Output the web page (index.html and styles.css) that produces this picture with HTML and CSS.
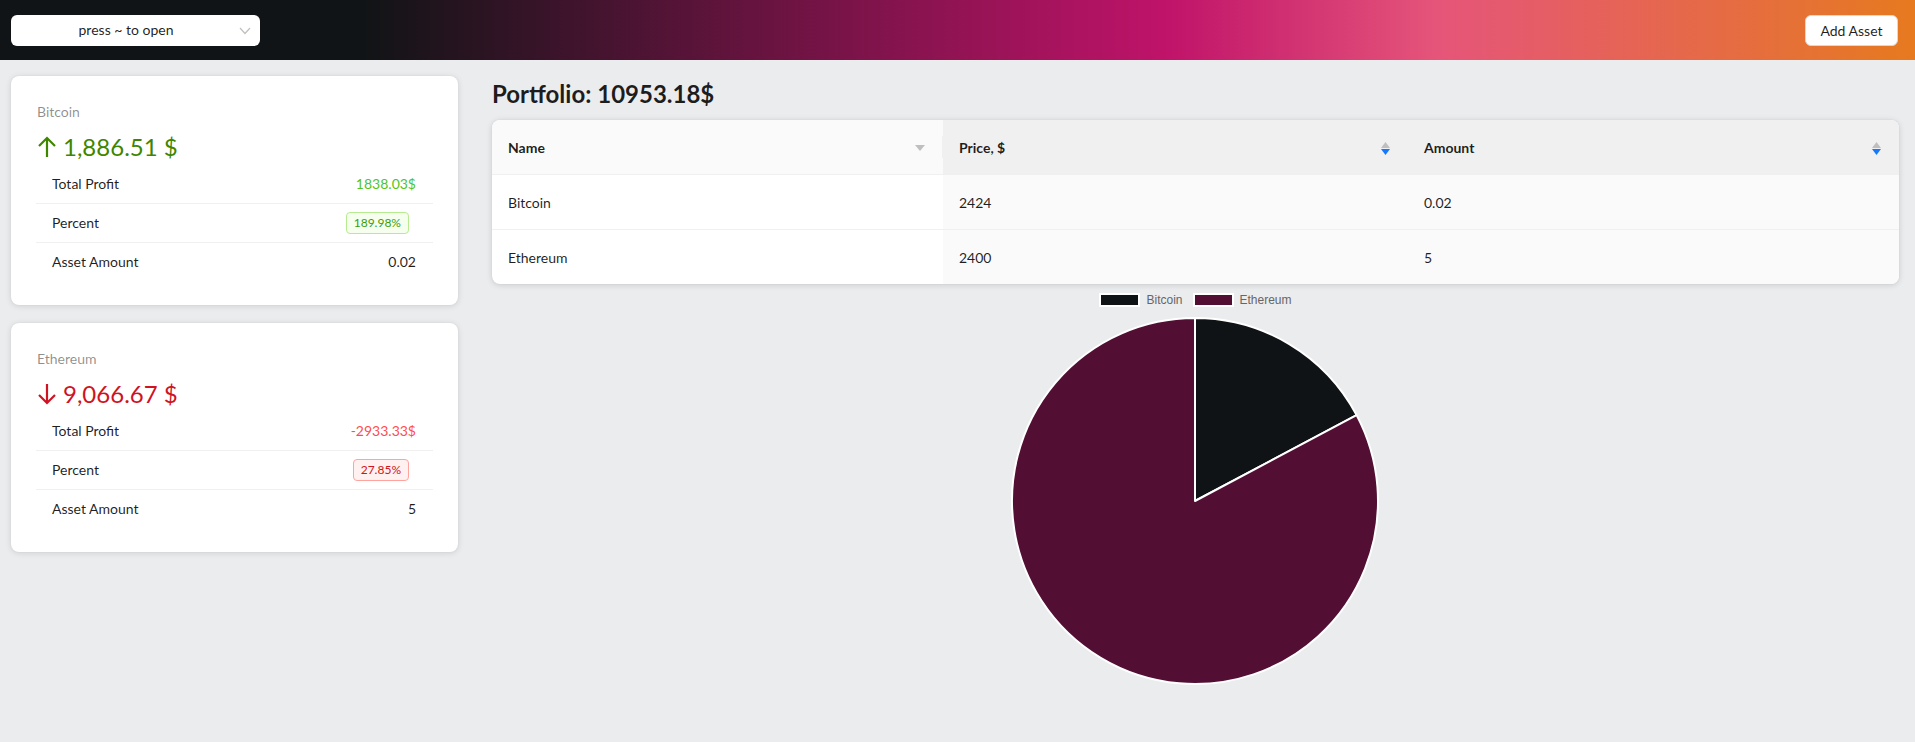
FILE: index.html
```html
<!DOCTYPE html>
<html lang="en">
<head>
<meta charset="utf-8">
<title>Portfolio</title>
<link rel="stylesheet" href="styles.css">
</head>
<body>
<header class="topbar">
  <div class="select">
    <span class="select-text">press ~ to open</span>
    <svg class="select-arrow" width="12" height="8" viewBox="0 0 12 8"><path d="M1 1 L6 6.5 L11 1" fill="none" stroke="#bfbfbf" stroke-width="1.2"/></svg>
  </div>
  <button class="btn">Add Asset</button>
</header>

<main class="layout">
  <aside class="cards">
    <section class="card">
      <div class="stat-title">Bitcoin</div>
      <div class="stat-value up">
        <svg class="stat-arrow" width="20" height="22" viewBox="0 0 20 22"><path d="M10 21 V2 M2 10 L10 2 L18 10" fill="none" stroke="currentColor" stroke-width="2.2"/></svg>
        <span>1,886.51 $</span>
      </div>
      <ul class="list">
        <li><span>Total Profit</span><span class="pos">1838.03$</span></li>
        <li><span>Percent</span><span class="tag tag-green">189.98%</span></li>
        <li><span>Asset Amount</span><span>0.02</span></li>
      </ul>
    </section>
    <section class="card">
      <div class="stat-title">Ethereum</div>
      <div class="stat-value down">
        <svg class="stat-arrow" width="20" height="22" viewBox="0 0 20 22"><path d="M10 1 V20 M2 12 L10 20 L18 12" fill="none" stroke="currentColor" stroke-width="2.2"/></svg>
        <span>9,066.67 $</span>
      </div>
      <ul class="list">
        <li><span>Total Profit</span><span class="neg">-2933.33$</span></li>
        <li><span>Percent</span><span class="tag tag-red">27.85%</span></li>
        <li><span>Asset Amount</span><span>5</span></li>
      </ul>
    </section>
  </aside>

  <section class="content">
    <h2 class="portfolio-title">Portfolio: 10953.18$</h2>
    <div class="table">
      <div class="th th-name">
        <span>Name</span>
        <svg class="filter-icon" width="10" height="7" viewBox="0 0 10 7"><path d="M0 0 H10 L5 6 Z" fill="#bfbfbf"/></svg>
      </div>
      <div class="th th-sorted">
        <span>Price, $</span>
        <span class="sorter">
          <svg width="9" height="6" viewBox="0 0 9 6"><path d="M0 6 L4.5 0 L9 6 Z" fill="#bfbfbf"/></svg>
          <svg width="9" height="6" viewBox="0 0 9 6"><path d="M0 0 L4.5 6 L9 0 Z" fill="#1677ff"/></svg>
        </span>
      </div>
      <div class="th th-sorted">
        <span>Amount</span>
        <span class="sorter">
          <svg width="9" height="6" viewBox="0 0 9 6"><path d="M0 6 L4.5 0 L9 6 Z" fill="#bfbfbf"/></svg>
          <svg width="9" height="6" viewBox="0 0 9 6"><path d="M0 0 L4.5 6 L9 0 Z" fill="#1677ff"/></svg>
        </span>
      </div>

      <div class="td">Bitcoin</div>
      <div class="td td-sorted">2424</div>
      <div class="td td-sorted">0.02</div>

      <div class="td td-last">Ethereum</div>
      <div class="td td-sorted td-last">2400</div>
      <div class="td td-sorted td-last">5</div>
    </div>

    <div class="chart">
      <div class="legend">
        <span class="legend-item"><span class="swatch swatch-btc"></span>Bitcoin</span>
        <span class="legend-item"><span class="swatch swatch-eth"></span>Ethereum</span>
      </div>
      <svg class="pie" width="370" height="370" viewBox="0 0 370 370">
        <path d="M185 185 L185 2 A183 183 0 0 1 346.58 99.10 Z" fill="#101315" stroke="#ffffff" stroke-width="2" stroke-linejoin="round"/>
        <path d="M185 185 L346.58 99.10 A183 183 0 1 1 185 2 Z" fill="#520f33" stroke="#ffffff" stroke-width="2" stroke-linejoin="round"/>
      </svg>
    </div>
  </section>
</main>
</body>
</html>
```

FILE: styles.css
```css
* {
  box-sizing: border-box;
}

html, body {
  margin: 0;
  padding: 0;
}

body {
  background: #ebecee;
  font-family: Lato, "Noto Sans", sans-serif;
  font-size: 14px;
  color: rgba(0, 0, 0, 0.88);
  min-height: 742px;
}

.topbar {
  height: 60px;
  display: flex;
  align-items: center;
  justify-content: space-between;
  padding: 0 17px 0 11px;
  background: linear-gradient(90deg, #111416 0%, #111416 19%, #c0136a 61%, #e5557a 75%, #e67a1f 100%);
}

.select {
  width: 249px;
  height: 31px;
  background: #ffffff;
  border-radius: 6px;
  display: flex;
  align-items: center;
  justify-content: center;
  position: relative;
  padding: 0 30px 0 11px;
}

.select-text {
  font-size: 14px;
  color: rgba(0, 0, 0, 0.88);
  line-height: 22px;
}

.select-arrow {
  position: absolute;
  right: 9px;
  top: 12px;
}

.btn {
  height: 31px;
  width: 93px;
  border: 1px solid #d9d9d9;
  background: #ffffff;
  border-radius: 6px;
  font-family: inherit;
  font-size: 14px;
  color: rgba(0, 0, 0, 0.88);
  padding: 0;
}

.layout {
  display: flex;
  align-items: flex-start;
  padding: 16px 16px 0 11px;
  gap: 34px;
}

.cards {
  width: 447px;
  flex: none;
  display: flex;
  flex-direction: column;
  gap: 18px;
}

.card {
  background: #ffffff;
  border-radius: 8px;
  box-shadow: 0 1px 6px rgba(0, 0, 0, 0.12), 0 0 2px rgba(0, 0, 0, 0.06);
  padding: 25px 25px 24px 25px;
}

.stat-title {
  color: rgba(0, 0, 0, 0.45);
  font-size: 14px;
  line-height: 22px;
  padding-left: 1px;
}

.stat-value {
  display: flex;
  align-items: center;
  gap: 6px;
  font-size: 24px;
  line-height: 32px;
  margin-top: 8px;
  padding-left: 1px;
}

.stat-value.up {
  color: #3f8600;
}

.stat-value.down {
  color: #cf1322;
}

.stat-arrow {
  flex: none;
}

.list {
  list-style: none;
  margin: 2px 0 0 0;
  padding: 0;
}

.list li {
  display: flex;
  align-items: center;
  justify-content: space-between;
  padding: 8px 17px 8px 16px;
  line-height: 22px;
  border-bottom: 1px solid #f0f0f0;
}

.list li:last-child {
  border-bottom: none;
}

.pos {
  color: #52c41a;
}

.neg {
  color: #ff4d4f;
}

.tag {
  font-size: 12px;
  line-height: 20px;
  padding: 0 7px;
  border-radius: 4px;
  border: 1px solid;
  margin-right: 7px;
}

.tag-green {
  color: #389e0d;
  background: #f6ffed;
  border-color: #b7eb8f;
}

.tag-red {
  color: #cf1322;
  background: #fff1f0;
  border-color: #ffa39e;
}

.content {
  flex: 1;
  min-width: 0;
}

.portfolio-title {
  margin: 0;
  font-size: 24px;
  font-weight: 700;
  line-height: 32px;
  padding-top: 2px;
  color: rgba(0, 0, 0, 0.88);
}

.table {
  margin-top: 10px;
  display: grid;
  grid-template-columns: 451px 465px 1fr;
  background: #ffffff;
  border-radius: 8px;
  box-shadow: 0 1px 6px rgba(0, 0, 0, 0.14), 0 0 2px rgba(0, 0, 0, 0.06);
  overflow: hidden;
}

.th {
  display: flex;
  align-items: center;
  justify-content: space-between;
  padding: 17px 16px 15px 16px;
  line-height: 22px;
  font-weight: 700;
  border-bottom: 1px solid #f0f0f0;
  position: relative;
}

.th-name {
  background: #fafafa;
}

.th-sorted {
  background: #f0f0f0;
}

.th-name::after {
  content: "";
  position: absolute;
  right: 0;
  top: 50%;
  width: 1px;
  height: 22px;
  margin-top: -11px;
  background: #f0f0f0;
}

.filter-icon {
  margin-right: 2px;
}

.sorter {
  display: flex;
  flex-direction: column;
  gap: 1px;
  margin-right: 2px;
}

.sorter svg {
  display: block;
}

.td {
  padding: 17px 16px 15px 16px;
  line-height: 22px;
  border-bottom: 1px solid #f0f0f0;
}

.td-sorted {
  background: #fafafa;
}

.td-last {
  border-bottom: none;
}

.chart {
  display: flex;
  flex-direction: column;
  align-items: center;
  padding-top: 9px;
}

.legend {
  display: flex;
  gap: 10px;
  font-family: "Liberation Sans", Arial, sans-serif;
  font-size: 12px;
  color: #666666;
  line-height: 14px;
}

.legend-item {
  display: flex;
  align-items: center;
  gap: 6px;
}

.swatch {
  width: 41px;
  height: 14px;
  border: 2px solid #ffffff;
  display: inline-block;
}

.swatch-btc {
  background: #101315;
}

.swatch-eth {
  background: #520f33;
}

.pie {
  margin-top: 9px;
  margin-left: -2px;
  display: block;
}
```
